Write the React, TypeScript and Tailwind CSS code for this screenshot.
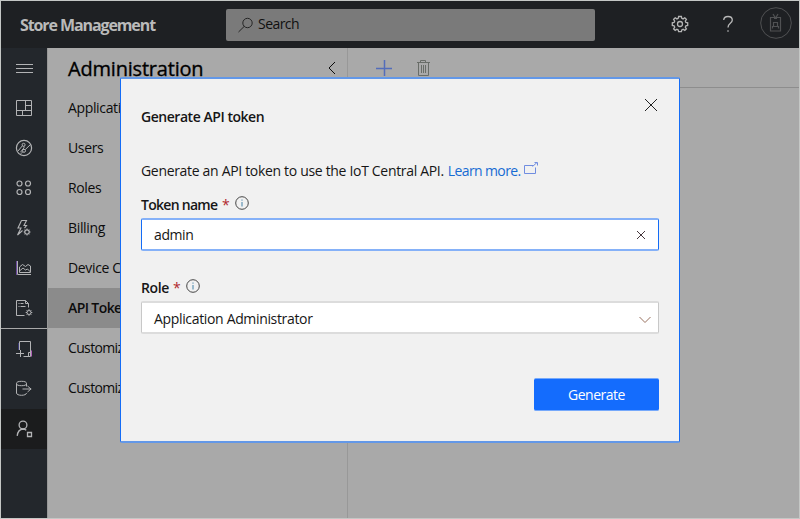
import type { ReactNode } from "react";

type IconProps = { children: ReactNode; className?: string; size?: number };

// Outline icon drawn on a pixel grid equal to its size.
function Icon({ children, className = "", size = 18 }: IconProps) {
  return (
    <svg
      width={size}
      height={size}
      viewBox={`0 0 ${size} ${size}`}
      fill="none"
      stroke="currentColor"
      className={`shrink-0 ${className}`}
    >
      {children}
    </svg>
  );
}

const MenuIcon = (
  <Icon>
    <path d="M1 5.500h17M1 9.500h17M1 13.500h17" />
  </Icon>
);
const DashboardIcon = (
  <Icon>
    <path d="M1.500 1.500h15v15h-15zM10.500 1.500v10M1.500 11.500h15M10.500 6.500h6M7.500 11.500v5" />
  </Icon>
);
const ExplorerIcon = (
  <Icon>
    <circle cx="9" cy="9" r="7.600" strokeWidth="1.200" />
    <circle cx="8.600" cy="5.800" r="1.500" />
    <circle cx="9" cy="11.800" r="1.500" />
    <path d="M7.400 6.800 3 12M10.200 10.600 15.800 5.200M8.900 7.200 9 8.800 5.500 13.200M5.800 14.800l2-2" />
  </Icon>
);
const DevicesIcon = (
  <Icon>
    <g strokeWidth="1.200">
      <circle cx="4.500" cy="4.500" r="2.500" />
      <circle cx="13" cy="4.500" r="2.500" />
      <circle cx="4.500" cy="13" r="2.500" />
      <circle cx="13" cy="13" r="2.500" />
    </g>
  </Icon>
);
const RulesIcon = (
  <Icon>
    <path strokeWidth="1.100" d="M6.500 1.500h5L9 6.500h2.500l-2 2.600M6.500 1.500 3 9h3L2.500 16 7.500 11.500" />
    <circle cx="12" cy="13" r="2.200" strokeWidth="1.200" />
    <path d="M12 9.500v1.300M12 15.200v1.300M8.700 13h1.200M14.200 13h1.300M9.700 10.700l.8.800M13.600 14.500l.8.800M14.400 10.700l-.8.800M10.500 14.500l-.8.800" />
  </Icon>
);
const AnalyticsIcon = (
  <Icon>
    <path d="M2.500 2v13.500H16" />
    <path d="M4.500 13.500V8l3-2.500 3 2 2.500-2 2.500 1.500v6.500zM4.500 12l3.500-3 2.500 2 2-1 3 3" />
    <path d="M1.500 2v14" stroke="#6a4a9c" />
  </Icon>
);
const JobsIcon = (
  <Icon>
    <path d="M9.500 16.500h-8v-15h9l3 3v4M10.500 1.500v3h3M3.500 4.500h1M5.500 4.500h3M3.500 7.500h1M5.500 7.500h5" />
    <circle cx="14" cy="13.500" r="2" />
    <path d="M14 10.200v1.300M14 15.500v1.300M10.700 13.500H12M16 13.500h1.300M11.700 11.200l.9.900M15.400 14.900l.9.900M16.300 11.200l-.9.900M12.600 14.900l-.9.900" />
  </Icon>
);
const TemplatesIcon = (
  <Icon>
    <path d="M4.500 10V1.500h11v15h-7M1 13.500h8M5.500 10v7M13.500 16.500v-4h2" />
    <path d="M16.500 10.500v6" stroke="#b060b8" />
    <path d="M3.500 3v7" stroke="#3c3c78" />
  </Icon>
);
const ExportIcon = (
  <Icon>
    <ellipse cx="6.500" cy="4.500" rx="5" ry="2.200" />
    <path d="M1.500 4.500V14c0 1.400 2.200 2.300 5 2.300s5-.9 5-2.300M11.500 4.500v3M7.500 10h8.800M12.500 7l3.500 3-3.500 3" />
  </Icon>
);
const AdminIcon = (
  <Icon>
    <g strokeWidth="1.300">
      <circle cx="8" cy="5" r="3.900" />
      <path d="M2.200 15.800C2.700 11.500 4.800 9.300 8 9c1.500.1 2.500.6 3.300 1.300" />
      <path d="M12.500 12.500h4v4h-4z" />
    </g>
  </Icon>
);

const railIcons: ReactNode[] = [
  MenuIcon,
  DashboardIcon,
  ExplorerIcon,
  DevicesIcon,
  RulesIcon,
  AnalyticsIcon,
  JobsIcon,
  TemplatesIcon,
  ExportIcon,
  AdminIcon,
];

const menuItems = [
  "Application",
  "Users",
  "Roles",
  "Billing",
  "Device Connection",
  "API Tokens",
  "Customize your application",
  "Customize help",
];

function Header() {
  return (
    <header className="flex h-[47px] shrink-0 items-center bg-[#1e2023]">
      <h1 className="w-[225px] pl-[19px] text-[16px] font-bold tracking-[-1.1px] text-[#bababa]">Store Management</h1>
      <div className="flex h-8 w-[369px] items-center rounded-[2px] bg-[#7a7a7a] pl-3 text-[14px] tracking-[-0.55px] text-[#101010]">
        <Icon size={16} className="mr-1 text-[#252525]">
          <circle cx="9.500" cy="6" r="4.700" />
          <path d="M6.200 9.400.5 15" />
        </Icon>
        <span className="-mt-0.5">Search</span>
      </div>
      <Icon size={18} className="-mt-px ml-[76px] text-[#b5b5b5]">
        <path
          strokeWidth="1.300"
          d="M7.600 1.500h2.800l.4 1.800 1.300.6 1.700-1.100 1.600 1.600-1.100 1.700.6 1.300 1.800.4v2.600l-1.800.4-.6 1.300 1.100 1.700-1.600 1.600-1.700-1.100-1.300.6-.4 1.800H7.600l-.4-1.800-1.300-.6-1.700 1.100-1.600-1.600 1.100-1.700-.6-1.300-1.800-.4V7.800l1.800-.4.6-1.300-1.100-1.700 1.600-1.600 1.700 1.100 1.300-.6z"
        />
        <circle cx="9" cy="9" r="2.500" strokeWidth="1.300" />
      </Icon>
      <Icon size={18} className="-mt-px ml-[30px] text-[#b8b8b8]">
        <path strokeWidth="1.300" d="M4.700 5C4.900 2.700 6.700 1.500 9 1.500s4.300 1.400 4.300 3.600C13.300 8.500 9 8.300 9 12.500M9 15.200v1.600" />
      </Icon>
      <Icon size={32} className="-mt-[3px] ml-[23px] text-[#505153]">
        <circle cx="16" cy="16" r="15.300" />
        <path strokeWidth="1.200" d="M10.500 10.500h10v13.500h-10zM13 7l2.500 4 2.500-4M14 11.500h3" />
        <path strokeWidth="1.200" d="M12.500 21.500v-2h6v2M13.500 19v-3.500h4V19" />
      </Icon>
    </header>
  );
}

function Rail() {
  return (
    <nav className="flex w-[46px] shrink-0 flex-col bg-[#23272c] text-[#b2b3b5]">
      {railIcons.map((icon, i) => (
        <div
          key={i}
          className={`flex h-10 shrink-0 items-center justify-center ${i === 7 ? "border-t border-[#a9a9a9]" : ""} ${i === 9 ? "mt-px bg-[#1b1c1d]" : ""}`}
        >
          {icon}
        </div>
      ))}
    </nav>
  );
}

function SidePanel() {
  return (
    <aside className="flex w-[301px] shrink-0 flex-col border-x border-[#989898] text-[14px] tracking-[-0.35px] text-[#0c0c0c]">
      <div className="flex h-10 items-center justify-between pr-[9px] pl-5">
        <h2 className="pt-0.5 text-[20px] tracking-[-0.2px] text-black [-webkit-text-stroke:0.35px_black]">Administration</h2>
        <Icon size={12}>
          <path d="M9 0 3 6l6 6" />
        </Icon>
      </div>
      {menuItems.map((item) => (
        <div
          key={item}
          className={`flex h-10 items-center pb-0.5 pl-5 whitespace-nowrap ${item === "API Tokens" ? "bg-[#8b8b8b] font-semibold tracking-[-0.6px]" : ""} ${item.startsWith("Customize") ? "tracking-[-0.65px]" : ""}`}
        >
          {item}
        </div>
      ))}
    </aside>
  );
}

function Label({ text, className }: { text: string; className: string }) {
  return (
    <div className="flex h-5 items-center text-[14px] font-semibold text-[#161616]">
      <span className={`pb-0.5 ${className}`}>{text}</span>
      <span className="ml-1 w-[5px] pb-0.5 font-normal text-[#b0282c]">*</span>
      <Icon size={14} className="mb-1 ml-2 text-[#333]">
        <circle cx="7" cy="7" r="6.300" strokeWidth="0.900" />
        <path d="M7 6v4.500M7 3.500v1.200" stroke="#4382a8" />
      </Icon>
    </div>
  );
}

function TokenDialog() {
  return (
    <section className="absolute top-[76px] left-[119px] flex h-[366px] w-[560px] flex-col rounded-[2px] border border-y-2 border-x-[#146cf6] border-y-[#6398e8] bg-[#f1f1f1] px-5 text-[14px] text-[#161616]">
      <div className="flex h-[77px] justify-between">
        <h3 className="pt-[28px] leading-5 font-semibold tracking-[-0.46px]">Generate API token</h3>
        <Icon size={14} className="mt-[19px] mr-px text-[#222]">
          <path d="m1 1 12 12M13 1 1 13" />
        </Icon>
      </div>
      <p className="mt-[4px] flex h-5 items-center whitespace-nowrap tracking-[-0.32px]">
        Generate an API token to use the IoT Central API.
        <a className="ml-1 w-[73px] tracking-[-0.62px] text-[#176bd3]">Learn more.</a>
        <Icon size={14} className="mb-1 ml-[3px] text-[#708de0]">
          <path d="M9 4.500H.5v8h11V6.500M8.500 5.500l4.500-4M10.500 1.500h3v3" />
        </Icon>
      </p>
      <div className="mt-[15px]">
        <Label text="Token name" className="w-[77px] tracking-[-0.72px]" />
      </div>
      <div className="mt-[3px] flex h-[33px] items-center justify-between rounded-[2px] border border-y-2 border-x-[#146cf6] border-y-[#85b1f8] bg-white pr-3 pl-3 tracking-[-0.4px]">
        admin
        <Icon size={10} className="text-[#45363c]">
          <path d="m1 1 8 8M9 1 1 9" />
        </Icon>
      </div>
      <div className="mt-[27px]">
        <Label text="Role" className="w-7 tracking-[-0.4px]" />
      </div>
      <div className="mt-[3px] flex h-[33px] items-center justify-between rounded-[2px] border border-y-2 border-x-[#c8c8c8] border-y-[#dcdcdc] bg-white pr-[7px] pl-3 tracking-[-0.34px]">
        <span className="pt-0.5">Application Administrator</span>
        <Icon size={12} className="mt-1 text-[#98705f]">
          <path d="m.5 3 5.500 5.500L11.500 3" />
        </Icon>
      </div>
      <button className="mt-[44px] h-[33px] w-[125px] self-end rounded-[2px] border-y border-[#76a9fb] bg-[#146cfd] tracking-[-0.5px] text-white">
        Generate
      </button>
    </section>
  );
}

export default function App() {
  return (
    <div className="relative flex h-[519px] w-[800px] flex-col overflow-hidden border border-[#c4c7c5] bg-[#a9a9a9] font-['Open_Sans','Noto_Sans',sans-serif]">
      <Header />
      <div className="flex min-h-0 flex-1">
        <Rail />
        <SidePanel />
        <main className="flex-1">
          <div className="flex h-10 items-center border-b border-[#8d8d8d] pl-7">
            <Icon size={16} className="text-[#536dba]">
              <path strokeWidth="1.500" d="M8.500 0v16M0 8.500h16" />
            </Icon>
            <Icon size={18} className="ml-[22px] text-[#696d68]">
              <path d="M3 3.500h13M6.500 3V1.500h5V3M4.500 4v12.500h10V4M7.500 6v8M9.500 6v8M11.500 6v8" />
            </Icon>
          </div>
        </main>
      </div>
      <TokenDialog />
    </div>
  );
}
